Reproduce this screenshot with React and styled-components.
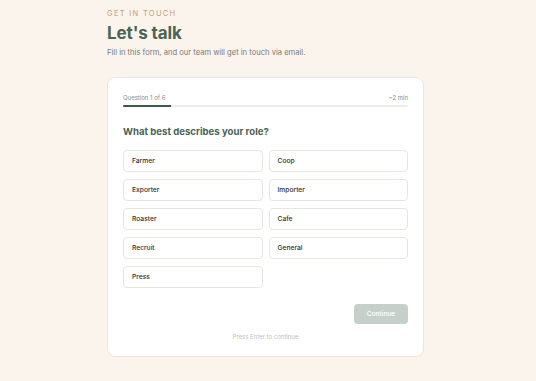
import React, { useState } from "react";
import styled, { createGlobalStyle } from "styled-components";

const GlobalStyle = createGlobalStyle`
  html, body {
    margin: 0;
    padding: 0;
    background: #fbf4ed;
    font-family: Inter, "Noto Sans", sans-serif;
    -webkit-font-smoothing: antialiased;
  }
`;

const Page = styled.div`
  width: 317px;
  margin-left: 107px;
  padding-top: 9px;
`;

const Eyebrow = styled.div`
  font-size: 7.5px;
  line-height: 10px;
  letter-spacing: 1.3px;
  color: #c79a80;
  text-transform: uppercase;
`;

const Title = styled.h1`
  margin: 4px 0 0;
  font-size: 17px;
  line-height: 20px;
  font-weight: 700;
  color: #4a6456;
  letter-spacing: -0.1px;
`;

const Lead = styled.p`
  margin: 4px 0 0;
  font-size: 7.6px;
  line-height: 11px;
  color: #7a7a76;
`;

const Card = styled.div`
  margin-top: 19px;
  background: #ffffff;
  border: 1px solid #efe5dc;
  border-radius: 8px;
  padding: 15px 15px 15px;
  box-sizing: border-box;
`;

const Meta = styled.div`
  display: flex;
  justify-content: space-between;
  font-size: 6px;
  line-height: 9px;
  color: #8b8b86;
`;

const Track = styled.div`
  margin-top: 3px;
  height: 2px;
  background: #eeece8;
  border-radius: 1px;
  overflow: hidden;
`;

const Fill = styled.div`
  height: 100%;
  background: #3f5a4c;
`;

const Question = styled.h2`
  margin: 19px 0 0;
  font-size: 9.6px;
  line-height: 12px;
  font-weight: 700;
  color: #4a6456;
`;

const Options = styled.div`
  margin-top: 12px;
  display: grid;
  grid-template-columns: 1fr 1fr;
  column-gap: 6px;
  row-gap: 7px;
`;

const Option = styled.button`
  height: 22px;
  box-sizing: border-box;
  text-align: left;
  padding: 0 8px;
  background: #ffffff;
  border: 1px solid ${(p) => (p.$active ? "#4a6456" : "#e9e5e0")};
  border-radius: 4px;
  font-family: inherit;
  font-size: 6.7px;
  font-weight: 500;
  color: #2f2f2c;
  cursor: pointer;
`;

const Actions = styled.div`
  margin-top: 16px;
  display: flex;
  justify-content: flex-end;
`;

const Continue = styled.button`
  width: 54px;
  height: 20px;
  border: none;
  border-radius: 4px;
  background: #c6d0cb;
  color: #ffffff;
  font-family: inherit;
  font-size: 6.6px;
  font-weight: 500;
`;

const Hint = styled.div`
  margin-top: 8px;
  text-align: center;
  font-size: 6px;
  line-height: 9px;
  color: #c2c0bc;
`;

const roles = ["Farmer", "Coop", "Exporter", "Importer", "Roaster", "Cafe", "Recruit", "General", "Press"];

export default function App() {
  const [role, setRole] = useState(null);
  return (
    <>
      <GlobalStyle />
      <Page>
        <Eyebrow>Get in touch</Eyebrow>
        <Title>Let's talk</Title>
        <Lead>Fill in this form, and our team will get in touch via email.</Lead>
        <Card>
          <Meta>
            <span>Question 1 of 6</span>
            <span>~2 min</span>
          </Meta>
          <Track>
            <Fill style={{ width: `${(1 / 6) * 100}%` }} />
          </Track>
          <Question>What best describes your role?</Question>
          <Options>
            {roles.map((r) => (
              <Option key={r} $active={role === r} onClick={() => setRole(r)}>
                {r}
              </Option>
            ))}
          </Options>
          <Actions>
            <Continue disabled={!role}>Continue</Continue>
          </Actions>
          <Hint>Press Enter to continue</Hint>
        </Card>
      </Page>
    </>
  );
}
